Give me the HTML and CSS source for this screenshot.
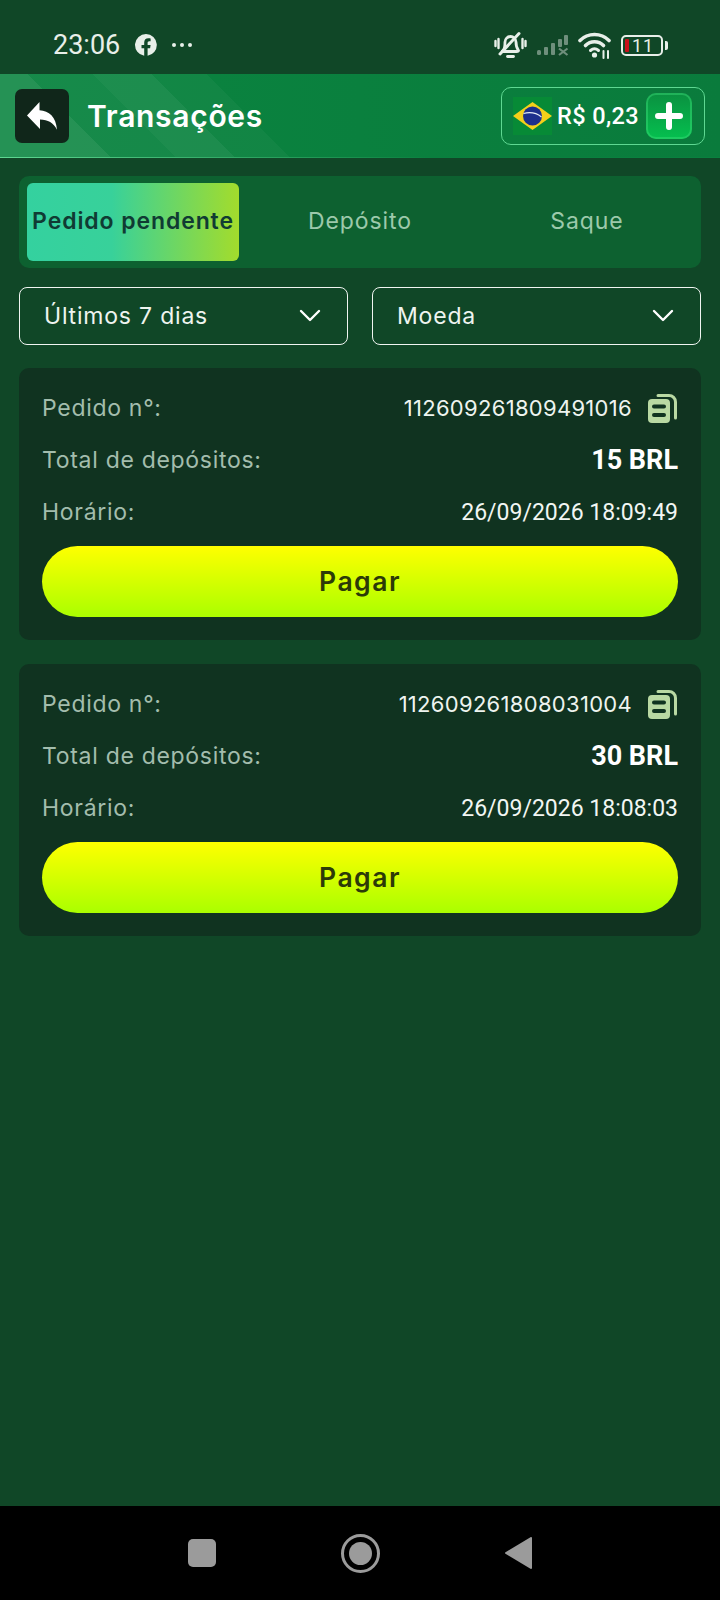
FILE: index.html
```html
<!DOCTYPE html>
<html lang="pt-BR">
<head>
    <meta charset="UTF-8">
    <meta name="viewport" content="width=device-width, initial-scale=1.0">
    <title>Transações</title>
    <link rel="stylesheet" href="styles.css">
</head>
<body>

    <!-- Barra de status -->
    <div class="status-bar">
        <span class="hora">23:06</span>
        <svg class="fb" width="22" height="22" viewBox="0 0 22 22"><path fill="#e8efe9" d="M11 0a11 11 0 0 0-1.800 21.850V14.200H6.500V11h2.700V8.600c0-2.750 1.600-4.250 4.100-4.250 1.200 0 2.300.2 2.300.2v2.700h-1.300c-1.300 0-1.700.8-1.700 1.650V11h3l-.5 3.200h-2.500v7.650A11 11 0 0 0 11 0z"/></svg>
        <svg class="pontos" width="22" height="6" viewBox="0 0 22 6"><circle cx="3" cy="3" r="2" fill="#e8efe9"/><circle cx="11" cy="3" r="2" fill="#e8efe9"/><circle cx="19" cy="3" r="2" fill="#e8efe9"/></svg>
        <div class="status-icones">
            <svg width="33" height="28" viewBox="0 0 33 28" fill="none" stroke="#e8efe9" stroke-width="2.800" stroke-linecap="round">
                <path d="M9 19.500c2-2 2-5 2-8.500 0-3 2.500-5.500 5.500-5.500S22 8 22 11c0 3 .5 6 2.500 8.500 0 .5-1 1-2 1H9.500c-1 0-1.500-.5-.5-1z"/>
                <path d="M13.500 25.500h6"/>
                <path d="M6 23 25 2.500" stroke-width="3"/>
                <path d="M1.500 10v5M4.500 8v9M28.500 8v9M31.500 10v5" stroke-width="2.400"/>
            </svg>
            <svg width="33" height="24" viewBox="0 0 33 24" fill="#6f8f7c">
                <rect x="1" y="17" width="4" height="5" rx="1.500"/>
                <rect x="8" y="14" width="4" height="8" rx="1"/>
                <rect x="15" y="10" width="4" height="12" rx="1"/>
                <rect x="22" y="6" width="4" height="8" rx="1"/>
                <rect x="28" y="2" width="4" height="10" rx="1"/>
                <path d="M23 15.500l8.500 6.500M31.500 15.500 23 22" stroke="#6f8f7c" stroke-width="2.200" fill="none"/>
            </svg>
            <svg width="33" height="28" viewBox="0 0 33 28" fill="none" stroke="#e8efe9" stroke-linecap="round">
                <path d="M2 9.500c8-8 21-8 29 0" stroke-width="3.600"/>
                <path d="M7.500 14.500c5-5 13-5 18 0" stroke-width="3.600"/>
                <path d="M12.500 19.500c2.500-2.200 5.500-2.200 8 0" stroke-width="3"/>
                <circle cx="16.500" cy="24" r="2.600" fill="#e8efe9" stroke="none"/>
                <path d="M25.500 20v7M30 20v7" stroke-width="2"/>
            </svg>
            <div class="bateria">
                <div class="bateria-corpo">
                    <span class="bateria-nivel"></span>
                    <span class="bateria-texto">11</span>
                </div>
                <span class="bateria-ponta"></span>
            </div>
        </div>
    </div>

    <header>
        <button class="voltar">
            <svg width="30" height="28" viewBox="0 0 30 28"><path fill="#fff" d="M0 13.500 12.500 0v8.200C22 9 29 14.500 30 27.800 26.500 20.500 21 17.600 13 17.400V27z"/></svg>
        </button>
        <h1>Transações</h1>
        <div class="saldo">
            <svg class="bandeira" width="39" height="38" viewBox="0 0 39 38">
                <rect width="39" height="38" fill="#078a36"/>
                <path d="M0 19 19.500 5 39 19 19.500 33z" fill="#f4cf1a"/>
                <circle cx="19.500" cy="19" r="9.500" fill="#1c2f8c"/>
                <path d="M10.500 16.500c6-1.500 13-.5 18 3.500" stroke="#e4ecf5" stroke-width="1.200" fill="none"/>
            </svg>
            <span class="saldo-valor">R$ 0,23</span>
            <button class="adicionar">
                <svg width="28" height="28" viewBox="0 0 28 28"><path d="M14 3v22M3 14h22" stroke="#fff" stroke-width="6" stroke-linecap="round"/></svg>
            </button>
        </div>
    </header>

    <div class="container">
        <!-- Abas -->
        <div class="abas">
            <div class="aba ativa">Pedido pendente</div>
            <div class="aba">Depósito</div>
            <div class="aba">Saque</div>
        </div>

        <!-- Filtros -->
        <div class="filtros">
            <div class="filtro">
                <span>Últimos 7 dias</span>
                <svg width="22" height="14" viewBox="0 0 22 14"><path d="M2 2l9 9 9-9" stroke="#fff" stroke-width="2.400" fill="none" stroke-linecap="round" stroke-linejoin="round"/></svg>
            </div>
            <div class="filtro">
                <span>Moeda</span>
                <svg width="22" height="14" viewBox="0 0 22 14"><path d="M2 2l9 9 9-9" stroke="#fff" stroke-width="2.400" fill="none" stroke-linecap="round" stroke-linejoin="round"/></svg>
            </div>
        </div>

        <!-- Pedidos -->
        <div class="pedido">
            <div class="linha">
                <span class="rotulo">Pedido n°:</span>
                <span class="numero">112609261809491016
                    <svg class="copiar" width="30" height="30" viewBox="0 0 30 30"><path fill="#b9d9a3" d="M4 6h14a4 4 0 0 1 4 4v16a4 4 0 0 1-4 4H4a4 4 0 0 1-4-4V10a4 4 0 0 1 4-4z"/><path d="M10 2.500h11a6.500 6.500 0 0 1 6.500 6.500v16" stroke="#b9d9a3" stroke-width="3" fill="none" stroke-linecap="round"/><path d="M6 13.500h10M6 22h10" stroke="#103320" stroke-width="4" stroke-linecap="round"/></svg>
                </span>
            </div>
            <div class="linha">
                <span class="rotulo">Total de depósitos:</span>
                <span class="total">15 BRL</span>
            </div>
            <div class="linha">
                <span class="rotulo">Horário:</span>
                <span class="horario">26/09/2026 18:09:49</span>
            </div>
            <button class="pagar">Pagar</button>
        </div>

        <div class="pedido">
            <div class="linha">
                <span class="rotulo">Pedido n°:</span>
                <span class="numero">112609261808031004
                    <svg class="copiar" width="30" height="30" viewBox="0 0 30 30"><path fill="#b9d9a3" d="M4 6h14a4 4 0 0 1 4 4v16a4 4 0 0 1-4 4H4a4 4 0 0 1-4-4V10a4 4 0 0 1 4-4z"/><path d="M10 2.500h11a6.500 6.500 0 0 1 6.500 6.500v16" stroke="#b9d9a3" stroke-width="3" fill="none" stroke-linecap="round"/><path d="M6 13.500h10M6 22h10" stroke="#103320" stroke-width="4" stroke-linecap="round"/></svg>
                </span>
            </div>
            <div class="linha">
                <span class="rotulo">Total de depósitos:</span>
                <span class="total">30 BRL</span>
            </div>
            <div class="linha">
                <span class="rotulo">Horário:</span>
                <span class="horario">26/09/2026 18:08:03</span>
            </div>
            <button class="pagar">Pagar</button>
        </div>
    </div>

    <!-- Barra de navegação -->
    <div class="nav-bar">
        <span class="nav-quadrado"></span>
        <span class="nav-circulo"><span></span></span>
        <svg width="27" height="32" viewBox="0 0 27 32"><path fill="#9b9b9b" stroke="#9b9b9b" stroke-width="2" stroke-linejoin="round" d="M1 16 26 1v30z"/></svg>
    </div>

</body>
</html>
```

FILE: styles.css
```css
/* Estilos generales */
body {
    font-family: Inter, "Liberation Sans", sans-serif;
    margin: 0;
    padding: 0;
    min-height: 1600px;
    display: flex;
    flex-direction: column;
    background-color: #104727;
    color: #fff;
}

button {
    border: none;
    padding: 0;
    font-family: inherit;
}

/* Barra de status */
.status-bar {
    height: 74px;
    box-sizing: border-box;
    padding: 16px 52px 0 53px;
    display: flex;
    align-items: center;
    color: #e8efe9;
}

.hora {
    font-family: Roboto, sans-serif;
    font-size: 27px;
    font-weight: 450;
}

.fb {
    margin-left: 15px;
}

.pontos {
    margin-left: 14px;
}

.status-icones {
    margin-left: auto;
    display: flex;
    align-items: center;
    gap: 9px;
}

.bateria {
    display: flex;
    align-items: center;
    margin-left: 1px;
}

.bateria-corpo {
    width: 42px;
    height: 21px;
    box-sizing: border-box;
    border: 2px solid #e8efe9;
    border-radius: 5px;
    display: flex;
    align-items: center;
    padding-left: 2px;
}

.bateria-nivel {
    width: 4px;
    height: 13px;
    background-color: #c8101a;
    border-radius: 1px;
}

.bateria-texto {
    font-family: Roboto, sans-serif;
    font-size: 18px;
    line-height: 17px;
    letter-spacing: 1px;
    margin-left: 3px;
}

.bateria-ponta {
    width: 3px;
    height: 9px;
    margin-left: 2px;
    background-color: #e8efe9;
    border-radius: 0 2px 2px 0;
}

/* Cabecera */
header {
    height: 84px;
    box-sizing: border-box;
    padding: 0 15px;
    display: flex;
    align-items: center;
    background-image:
        linear-gradient(45deg,
            rgba(255, 255, 255, 0.11) 0 78px,
            rgba(255, 255, 255, 0.05) 78px 124px,
            rgba(255, 255, 255, 0.08) 124px 166px,
            rgba(255, 255, 255, 0.03) 166px 205px,
            transparent 205px),
        linear-gradient(to right, #0a8540, #0a7b3c);
    border-bottom: 1px solid transparent;
    border-image: linear-gradient(to right, #5fd892, #0a803f 60%) 1;
}

.voltar {
    width: 54px;
    height: 54px;
    border-radius: 7px;
    background-color: #10261a;
    display: flex;
    align-items: center;
    justify-content: center;
}

h1 {
    margin: 0 0 0 18px;
    font-size: 30px;
    font-weight: 600;
    letter-spacing: 0.7px;
}

.saldo {
    margin-left: auto;
    width: 204px;
    height: 58px;
    box-sizing: border-box;
    padding: 0 12px 0 11px;
    display: flex;
    align-items: center;
    border: 1px solid #5fd892;
    border-radius: 10px;
}

.saldo-valor {
    margin-left: 5px;
    font-family: Roboto, sans-serif;
    font-size: 23.5px;
    font-weight: 500;
    letter-spacing: 0.4px;
    white-space: nowrap;
}

.adicionar {
    margin-left: auto;
    width: 46px;
    height: 46px;
    border-radius: 10px;
    background: linear-gradient(#0a9040, #05c04f);
    box-shadow: inset 0 0 0 2px rgba(60, 220, 120, 0.45);
    display: flex;
    align-items: center;
    justify-content: center;
}

/* Contenido */
.container {
    flex: 1;
    padding: 18px 19px;
    display: flex;
    flex-direction: column;
}

.abas {
    height: 92px;
    box-sizing: border-box;
    padding: 7px 8px;
    display: grid;
    grid-template-columns: repeat(3, 1fr);
    column-gap: 15px;
    background-color: #0d6130;
    border-radius: 10px;
}

.aba {
    display: flex;
    align-items: center;
    justify-content: center;
    padding-bottom: 2px;
    font-size: 23px;
    letter-spacing: 0.9px;
    color: #9cc9ab;
    white-space: nowrap;
}

.aba.ativa {
    font-weight: 600;
    color: #103b33;
    background: linear-gradient(to right, #34d19f, #38d19a 40%, #a3dc2c);
    border-radius: 6px;
}

.filtros {
    margin-top: 19px;
    display: grid;
    grid-template-columns: 1fr 1fr;
    column-gap: 24px;
}

.filtro {
    height: 58px;
    box-sizing: border-box;
    padding: 0 26px 0 24px;
    display: flex;
    align-items: center;
    justify-content: space-between;
    border: 1px solid #f0f5f1;
    border-radius: 8px;
    font-size: 23px;
    letter-spacing: 0.8px;
    color: #eef4ef;
}

.pedido {
    margin-top: 23px;
    padding: 14px 23px 23px;
    background-color: #103320;
    border-radius: 10px;
}

.pedido + .pedido {
    margin-top: 24px;
}

.linha {
    height: 52px;
    display: flex;
    align-items: center;
    justify-content: space-between;
}

.rotulo {
    font-size: 23px;
    letter-spacing: 0.7px;
    color: #a3bdad;
}

.numero {
    display: flex;
    align-items: center;
    gap: 16px;
    font-size: 22px;
    letter-spacing: 0.3px;
    color: #eef4ef;
}

.copiar {
    flex: none;
}

.total {
    font-family: Roboto, sans-serif;
    font-size: 27px;
    font-weight: 700;
}

.horario {
    font-family: Roboto, sans-serif;
    font-size: 23px;
    color: #f2f6f3;
}

.pagar {
    display: block;
    width: 100%;
    height: 71px;
    margin-top: 8px;
    padding-bottom: 2px;
    border-radius: 36px;
    background: linear-gradient(#ffff00, #aaff00);
    font-size: 26.5px;
    font-weight: 600;
    letter-spacing: 1.5px;
    color: #2c3a08;
}

/* Barra de navegación */
.nav-bar {
    height: 94px;
    display: flex;
    align-items: center;
    justify-content: center;
    gap: 125px;
    background-color: #000;
}

.nav-quadrado {
    width: 28px;
    height: 28px;
    background-color: #9b9b9b;
    border-radius: 5px;
}

.nav-circulo {
    width: 39px;
    height: 39px;
    box-sizing: border-box;
    border: 3px solid #9b9b9b;
    border-radius: 50%;
    display: flex;
    align-items: center;
    justify-content: center;
}

.nav-circulo span {
    width: 23px;
    height: 23px;
    background-color: #9b9b9b;
    border-radius: 50%;
}
```
